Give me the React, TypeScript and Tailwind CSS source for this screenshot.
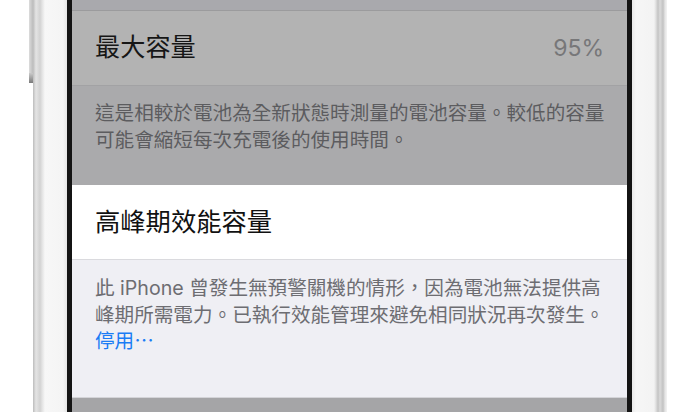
const cjk = "font-['Inter','Noto_Sans_CJK_TC',sans-serif]"

function LeftBezel() {
  return (
    <div className="relative flex h-full">
      {/* side button */}
      <div className="absolute left-[-4px] top-0 h-[83px] w-[4px] bg-[linear-gradient(to_right,#dcdcdc,#bcbcbc)]">
        <div className="absolute bottom-0 left-0 h-[10px] w-[4px] bg-[linear-gradient(to_bottom,#c9c9c9,#7a7a7a)]" />
      </div>
      <div className="h-full w-[34px] bg-[linear-gradient(to_right,#bcbcbc_0px,#e4e4e4_3px,#d2d2d2_7px,#e2e2e2_9px,#f7f7f7_12px,#f4f4f4_30px,#e6e6e6_34px)]" />
      <div className="h-full w-[5px] bg-[#141414]" />
    </div>
  )
}

function RightBezel() {
  return (
    <div className="flex h-full">
      <div className="h-full w-[5px] bg-[#141414]" />
      <div className="h-full w-[35px] bg-[linear-gradient(to_right,#e9e9e9_0px,#f6f6f6_4px,#f3f3f3_22px,#dedede_24px,#c3c3c3_26px,#dadada_28px,#c2c2c2_31px,#e4e4e4_33px,#f3f3f3_35px)]" />
    </div>
  )
}

function Screen() {
  return (
    <div lang="zh-TW" className={`flex h-full w-[555px] flex-col ${cjk}`}>
      <div className="h-[10px] bg-[#a9a9ad]" />
      <div className="h-px bg-[#9b9b9d]" />

      <div className="flex h-[74px] items-center justify-between bg-[#b3b3b3] px-[23px]">
        <span className="text-[25.2px] text-[#161616]">最大容量</span>
        <span className="text-[23px] text-[#777779]">95%</span>
      </div>
      <div className="h-px bg-[#a2a2a4]" />

      <div className="h-[99px] bg-[#aaaaac] px-[23px] pt-[14px] text-[19.6px] leading-[26.5px] text-[#5c5c5f] whitespace-nowrap">
        這是相較於電池為全新狀態時測量的電池容量。較低的容量
        <br />
        可能會縮短每次充電後的使用時間。
      </div>

      <div className="flex h-[74px] items-center bg-white px-[23px]">
        <span className="text-[25.3px] text-[#111]">高峰期效能容量</span>
      </div>
      <div className="h-px bg-[#dadade]" />

      <div className="h-[137px] bg-[#efeff4] px-[23px] pt-[15px] text-[19.6px] leading-[26.5px] text-[#6d6d72] whitespace-nowrap">
        此 iPhone 曾發生無預警關機的情形，因為電池無法提供高
        <br />
        峰期所需電力。已執行效能管理來避免相同狀況再次發生。
        <br />
        <span className="text-[#1a7cf5]">停用⋯</span>
      </div>
      <div className="h-px bg-[#d4d4d8]" />
      <div className="flex-1 bg-[#a5a5a7]" />
    </div>
  )
}

export default function App() {
  return (
    <div className="flex h-[412px] w-[700px] overflow-hidden bg-white">
      <div className="w-[33px]" />
      <LeftBezel />
      <Screen />
      <RightBezel />
      <div className="flex-1" />
    </div>
  )
}
